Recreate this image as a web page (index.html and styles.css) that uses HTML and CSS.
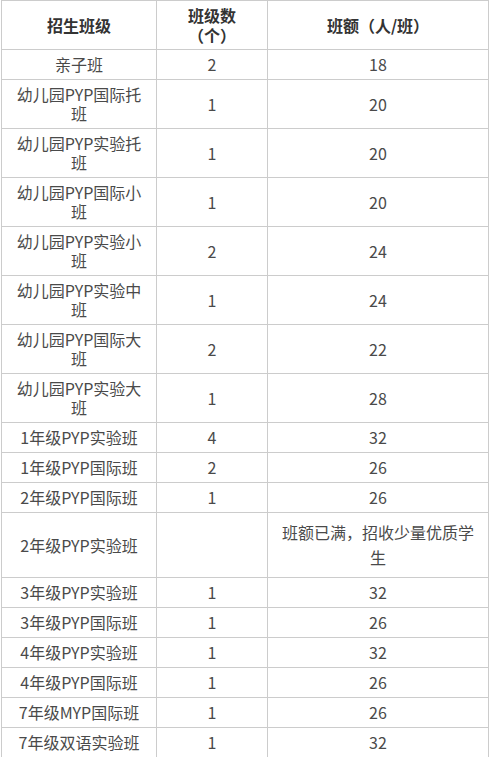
FILE: index.html
```html
<!DOCTYPE html>
<html lang="zh-CN">
<head>
<meta charset="utf-8">
<title>招生班级</title>
<link rel="stylesheet" href="styles.css">
</head>
<body>
<table class="plan">
  <colgroup>
    <col class="c1">
    <col class="c2">
    <col class="c3">
  </colgroup>
  <thead>
    <tr><th>招生班级</th><th>班级数<br>（个）</th><th>班额（人/班）</th></tr>
  </thead>
  <tbody>
    <tr><td>亲子班</td><td>2</td><td>18</td></tr>
    <tr><td>幼儿园PYP国际托班</td><td>1</td><td>20</td></tr>
    <tr><td>幼儿园PYP实验托班</td><td>1</td><td>20</td></tr>
    <tr><td>幼儿园PYP国际小班</td><td>1</td><td>20</td></tr>
    <tr><td>幼儿园PYP实验小班</td><td>2</td><td>24</td></tr>
    <tr><td>幼儿园PYP实验中班</td><td>1</td><td>24</td></tr>
    <tr><td>幼儿园PYP国际大班</td><td>2</td><td>22</td></tr>
    <tr><td>幼儿园PYP实验大班</td><td>1</td><td>28</td></tr>
    <tr><td>1年级PYP实验班</td><td>4</td><td>32</td></tr>
    <tr><td>1年级PYP国际班</td><td>2</td><td>26</td></tr>
    <tr><td>2年级PYP国际班</td><td>1</td><td>26</td></tr>
    <tr><td>2年级PYP实验班</td><td></td><td class="note">班额已满，招收少量优质学生</td></tr>
    <tr><td>3年级PYP实验班</td><td>1</td><td>32</td></tr>
    <tr><td>3年级PYP国际班</td><td>1</td><td>26</td></tr>
    <tr><td>4年级PYP实验班</td><td>1</td><td>32</td></tr>
    <tr><td>4年级PYP国际班</td><td>1</td><td>26</td></tr>
    <tr><td>7年级MYP国际班</td><td>1</td><td>26</td></tr>
    <tr><td>7年级双语实验班</td><td>1</td><td>32</td></tr>
  </tbody>
</table>
</body>
</html>
```

FILE: styles.css
```css
html, body {
  margin: 0;
  padding: 0;
  background: #fff;
}

body {
  font-family: "Noto Sans CJK SC", "Microsoft YaHei", sans-serif;
  font-size: 16px;
  line-height: 19px;
  color: #4a4a4a;
}

.plan {
  border-collapse: collapse;
  table-layout: fixed;
  width: 487px;
  margin: 0 0 0 1px;
}

.plan .c1 { width: 155px; }
.plan .c2 { width: 111px; }
.plan .c3 { width: 221px; }

.plan th,
.plan td {
  border: 1px solid #cccccc;
  padding: 5px 10px;
  text-align: center;
  vertical-align: middle;
  word-break: break-all;
}

.plan th {
  font-weight: bold;
  color: #333;
  line-height: 20px;
  padding-top: 4px;
  padding-bottom: 4px;
}

.plan td.note {
  line-height: 25px;
  padding-top: 7px;
  padding-bottom: 7px;
}
```
